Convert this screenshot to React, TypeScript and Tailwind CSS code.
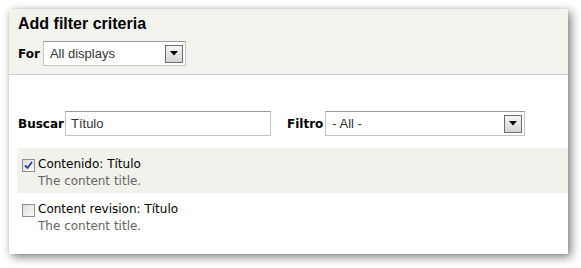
const DropButton = () => (
  <div className="flex h-[18px] w-[18px] items-center justify-center border border-[#6e6e6e] bg-gradient-to-b from-[#f6f6f6] to-[#d4d4d4]">
    <svg width="8" height="5" viewBox="0 0 8 5">
      <path d="M0 0 L8 0 L4 4.5 Z" fill="#000" />
    </svg>
  </div>
);

const Select = ({ value, width }: { value: string; width: string }) => (
  <div
    className={`flex h-[25px] ${width} items-center justify-between border border-[#c4c4c4] border-t-[#9a9a9a] bg-white pl-[6px] pr-[2px] font-['Liberation_Sans',Arial,sans-serif] text-[13px] text-[#333]`}
  >
    <span>{value}</span>
    <DropButton />
  </div>
);

const Checkbox = ({ checked }: { checked?: boolean }) => (
  <div className="relative mt-[3px] h-[13px] w-[13px] shrink-0 border border-[#8f8f8f] bg-gradient-to-br from-[#dcdcdc] to-[#fbfbfb]">
    {checked && (
      <svg className="absolute left-[1px] top-[1px]" width="9" height="9" viewBox="0 0 9 9">
        <path d="M1 4.5 L3.5 7 L8 1" stroke="#2b3fa0" strokeWidth="1.8" fill="none" />
      </svg>
    )}
  </div>
);

const FilterRow = ({ label, checked }: { label: string; checked?: boolean }) => (
  <div className={`flex gap-[3px] pb-[3px] pl-[5px] pt-[8px] ${checked ? "bg-[#f2f2ec]" : ""}`}>
    <Checkbox checked={checked} />
    <div className="leading-[17px]">
      <div className="text-black">{label}</div>
      <div className="text-[#666]">The content title.</div>
    </div>
  </div>
);

export default function App() {
  return (
    <div className="min-h-screen bg-white pl-[9px] pt-[9px]">
      <div className="h-[245px] w-[559px] bg-white font-['DejaVu_Sans',Tahoma,sans-serif] text-[12px] shadow-[3px_3px_9px_rgba(0,0,0,0.5),0_0_3px_rgba(0,0,0,0.08)]">
        {/* header */}
        <div className="h-[66px] border-b border-[#cdcdc8] bg-[#f3f3ee] px-[9px] pt-[5px]">
          <h2 className="font-['Liberation_Sans',Arial,sans-serif] text-[16px] font-bold leading-[20px] text-black">
            Add filter criteria
          </h2>
          <div className="mt-[7px] flex items-center gap-[3px]">
            <span className="font-bold text-black">For</span>
            <Select value="All displays" width="w-[143px]" />
          </div>
        </div>

        {/* body */}
        <div className="pl-[8px] pt-[36px]">
          <div className="flex items-center pl-[1px]">
            <span className="mr-[1px] font-bold text-black">Buscar</span>
            <div className="flex h-[25px] w-[206px] items-center border border-[#c4c4c4] border-t-[#9a9a9a] bg-white pl-[5px] font-['Liberation_Sans',Arial,sans-serif] text-[13px] text-[#333]">
              Título
            </div>
            <span className="ml-[16px] mr-[2px] font-bold text-black">Filtro</span>
            <Select value="- All -" width="w-[200px]" />
          </div>

          <div className="mt-[12px]">
            <FilterRow label="Contenido: Título" checked />
            <FilterRow label="Content revision: Título" />
          </div>
        </div>
      </div>
    </div>
  );
}
